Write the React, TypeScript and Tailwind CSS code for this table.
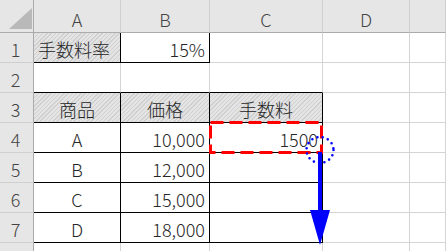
import React from 'react';

type Cell = {
  t?: string;
  al?: 'left' | 'right' | 'center';
  h?: boolean;
  r?: boolean;
  b?: boolean;
};

const cols = ['A', 'B', 'C', 'D', ''];

const k = (t: string, al: Cell['al'], h = false): Cell => ({ t, al, h, r: true, b: true });

// row 8 is only partly visible, its number falls below the window
const rows: { n: number; label: string; cells: Cell[] }[] = [
  { n: 1, label: '1', cells: [k('手数料率', 'left', true), k('15%', 'right'), {}, {}, {}] },
  { n: 2, label: '2', cells: [{ b: true }, { b: true }, { b: true }, {}, {}] },
  { n: 3, label: '3', cells: [k('商品', 'center', true), k('価格', 'center', true), k('手数料', 'center', true), {}, {}] },
  { n: 4, label: '4', cells: [k('A', 'center'), k('10,000', 'right'), k('1500', 'right'), {}, {}] },
  { n: 5, label: '5', cells: [k('B', 'center'), k('12,000', 'right'), k('', 'right'), {}, {}] },
  { n: 6, label: '6', cells: [k('C', 'center'), k('15,000', 'right'), k('', 'right'), {}, {}] },
  { n: 7, label: '7', cells: [k('D', 'center'), k('18,000', 'right'), k('', 'right'), {}, {}] },
  { n: 8, label: '', cells: [{}, {}, {}, {}, {}] },
];

const alignCls = {
  left: 'justify-start pl-[4px]',
  right: 'justify-end pr-[4px]',
  center: 'justify-center',
};

const GridCell = ({ c }: { c: Cell }) => (
  <div
    className={[
      'flex items-center pt-[2px] border-r border-b text-[18px] leading-none text-[#262626]',
      c.r ? 'border-r-black' : 'border-r-[#d4d4d4]',
      c.b ? 'border-b-black' : 'border-b-[#d4d4d4]',
      c.h
        ? 'bg-[repeating-linear-gradient(135deg,#d0d0d0_0px,#d0d0d0_1px,#e4e4e4_1px,#e4e4e4_3px)]'
        : 'bg-white',
      alignCls[c.al ?? 'left'],
    ].join(' ')}
  >
    {c.t}
  </div>
);

export default function App() {
  return (
    <div className="relative w-[446px] h-[251px] overflow-hidden bg-white font-['Noto_Sans_CJK_JP','Noto_Sans',sans-serif] font-light">
      <div className="grid grid-cols-[34px_87px_89px_113px_87px_1fr] grid-rows-[33px_repeat(8,30px)]">
        {/* corner */}
        <div className="flex items-end justify-end bg-[#e6e6e6] border-r border-b border-r-[#ababab] border-b-[#ababab] pr-[1px] pb-[3px]">
          <svg width="23" height="21" viewBox="0 0 23 21">
            <polygon points="23,0 23,21 0,21" fill="#b9b9b9" />
          </svg>
        </div>
        {cols.map((c, i) => (
          <div
            key={i}
            className="flex items-center justify-center pt-[5px] bg-[#e6e6e6] border-r border-b border-r-[#cfcfcf] border-b-[#ababab] text-[18px] leading-none text-[#444]"
          >
            {c}
          </div>
        ))}
        {rows.map((row) => (
          <React.Fragment key={row.n}>
            <div className="flex items-center justify-center pt-[2px] pr-[2px] bg-[#e6e6e6] border-r border-b border-r-[#ababab] border-b-[#cfcfcf] text-[18px] leading-none text-[#444]">
              {row.label}
            </div>
            {row.cells.map((c, i) => (
              <GridCell key={i} c={c} />
            ))}
          </React.Fragment>
        ))}
      </div>

      {/* annotations: copy selection, fill handle, drag arrow */}
      <svg className="absolute inset-0 pointer-events-none" width="446" height="251" viewBox="0 0 446 251">
        <rect x="210.5" y="122.5" width="111" height="30" fill="none" stroke="#ff0000" strokeWidth="3" strokeDasharray="13 6" />
        <line x1="320" y1="152" x2="320" y2="212" stroke="#0000ff" strokeWidth="4" />
        <polygon points="310,210 330,210 320,245" fill="#0000ff" />
        <ellipse cx="320" cy="150" rx="13.5" ry="13" fill="none" stroke="#0000ff" strokeWidth="2.6" strokeLinecap="round" strokeDasharray="0 5.4" />
      </svg>
    </div>
  );
}
